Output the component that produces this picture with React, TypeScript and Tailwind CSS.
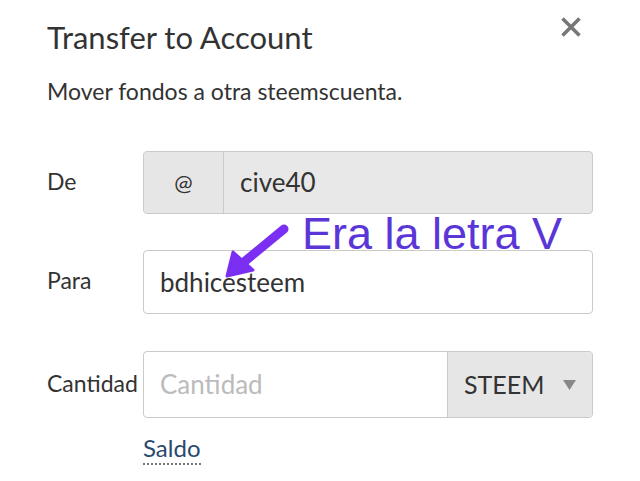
const font = { fontFamily: 'Lato, "Noto Sans", sans-serif' }

const Label = ({ children }: { children: React.ReactNode }) => (
  <div className="w-[96px] shrink-0 text-[23px] text-[#333] leading-[30px] pb-[4px]">{children}</div>
)

export default function App() {
  return (
    <div className="relative w-[640px] h-[481px] overflow-hidden bg-white text-[#333]" style={font}>
      <div className="pl-[47px] pr-[47px] pt-[17px]">
        <div className="flex items-start justify-between">
          <h1 className="text-[31px] leading-[40px] font-normal text-[#333]">Transfer to Account</h1>
          <button className="-mt-[1px] mr-[11px]">
            <svg width="22" height="22" viewBox="0 0 22 22">
              <path d="M2.5 2.5 L19.5 19.5 M19.5 2.5 L2.5 19.5" stroke="#777" strokeWidth="3.6" strokeLinecap="butt" />
            </svg>
          </button>
        </div>
        <p className="mt-[19px] text-[23px] leading-[30px] text-[#333]">Mover fondos a otra steemscuenta.</p>

        {/* De */}
        <div className="mt-[45px] flex items-center">
          <Label>De</Label>
          <div className="flex h-[63px] w-[450px] rounded-[4px] border border-[#cacaca] bg-[#e8e8e8] overflow-hidden">
            <div className="w-[80px] flex items-center justify-center border-r border-[#cacaca] bg-[#e6e6e6] text-[22px]">@</div>
            <div className="flex items-center pl-[16px] text-[26px] text-[#333]">cive40</div>
          </div>
        </div>

        {/* Para */}
        <div className="mt-[36px] flex items-center">
          <Label>Para</Label>
          <div className="flex h-[64px] w-[450px] items-center rounded-[4px] border border-[#cacaca] bg-white pl-[16px] text-[26px] text-[#333]">
            bdhicesteem
          </div>
        </div>

        {/* Cantidad */}
        <div className="mt-[37px] flex items-center">
          <Label>Cantidad</Label>
          <div className="flex h-[67px] w-[450px] rounded-[4px] border border-[#cacaca] bg-white overflow-hidden">
            <div className="flex flex-1 items-center pl-[16px] text-[26px] text-[#bbbbbb]">Cantidad</div>
            <div className="flex w-[145px] items-center justify-between border-l border-[#cacaca] bg-[#e6e6e6] pl-[16px] pr-[16px] text-[25px] text-[#333]">
              <span>STEEM</span>
              <svg width="13" height="10" viewBox="0 0 13 10">
                <path d="M0 0 L13 0 L6.5 10 Z" fill="#888" />
              </svg>
            </div>
          </div>
        </div>

        <div className="mt-[15px] pl-[96px]">
          <span className="inline-block text-[24px] leading-[30px] text-[#2a4a6e] border-b-2 border-dotted border-[#777]">Saldo</span>
        </div>
      </div>

      {/* annotation overlay */}
      <div
        className="absolute left-[302px] top-[210px] text-[45px] leading-[48px] text-[#5a36d8]"
        style={{ fontFamily: '"Liberation Sans", Arial, sans-serif' }}
      >
        Era la letra V
      </div>
      <svg className="absolute left-[220px] top-[220px]" width="80" height="65" viewBox="0 0 80 65">
        <path d="M64 9 L24 42" stroke="#7b2ff2" strokeWidth="9" strokeLinecap="round" />
        <path d="M7 56 L13 32 L33 50 Z" fill="#7b2ff2" stroke="#7b2ff2" strokeWidth="3" strokeLinejoin="round" />
      </svg>
    </div>
  )
}
